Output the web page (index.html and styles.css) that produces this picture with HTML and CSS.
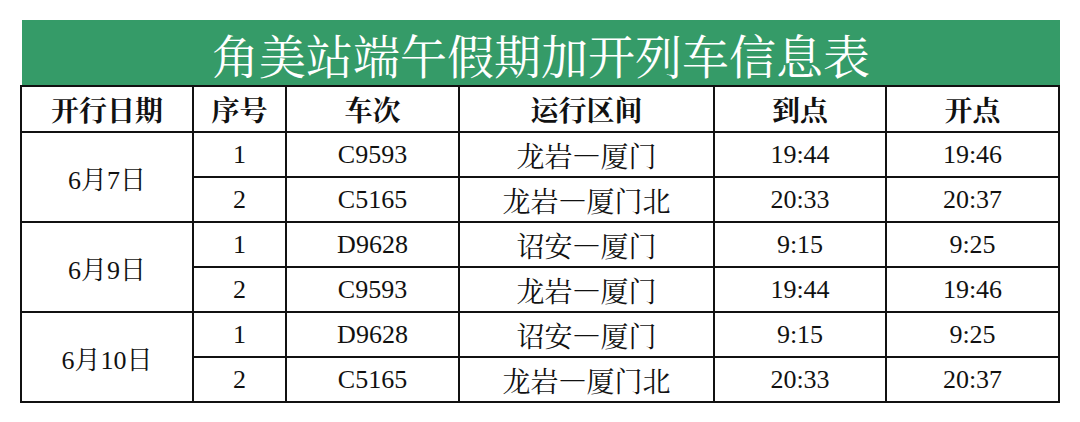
FILE: index.html
```html
<!DOCTYPE html>
<html lang="zh-CN">
<head>
<meta charset="utf-8">
<title>角美站端午假期加开列车信息表</title>
<link rel="stylesheet" href="styles.css">
</head>
<body>
<div class="sheet">
  <div class="title">角美站端午假期加开列车信息表</div>
  <table class="grid">
    <colgroup>
      <col class="c-date"><col class="c-no"><col class="c-train"><col class="c-route"><col class="c-arr"><col class="c-dep">
    </colgroup>
    <thead>
      <tr><th>开行日期</th><th>序号</th><th>车次</th><th>运行区间</th><th>到点</th><th>开点</th></tr>
    </thead>
    <tbody>
      <tr><td rowspan="2" class="date">6月7日</td><td>1</td><td>C9593</td><td class="cjk">龙岩—厦门</td><td>19:44</td><td>19:46</td></tr>
      <tr><td>2</td><td>C5165</td><td class="cjk">龙岩—厦门北</td><td>20:33</td><td>20:37</td></tr>
      <tr><td rowspan="2" class="date">6月9日</td><td>1</td><td>D9628</td><td class="cjk">诏安—厦门</td><td>9:15</td><td>9:25</td></tr>
      <tr><td>2</td><td>C9593</td><td class="cjk">龙岩—厦门</td><td>19:44</td><td>19:46</td></tr>
      <tr><td rowspan="2" class="date">6月10日</td><td>1</td><td>D9628</td><td class="cjk">诏安—厦门</td><td>9:15</td><td>9:25</td></tr>
      <tr><td>2</td><td>C5165</td><td class="cjk">龙岩—厦门北</td><td>20:33</td><td>20:37</td></tr>
    </tbody>
  </table>
</div>
</body>
</html>
```

FILE: styles.css
```css
html, body {
  margin: 0;
  padding: 0;
  background: #ffffff;
}

.sheet {
  padding: 20px 20px 0 20px;
  width: 1040px;
}

.title {
  margin-left: 2px;
  width: 1038px;
  height: 66px;
  background: #359b68;
  color: #ffffff;
  font-family: "Noto Serif CJK SC", "Noto Sans CJK SC", serif;
  font-size: 47px;
  line-height: 68px;
  text-align: center;
}

.grid {
  border-collapse: collapse;
  width: 1040px;
  table-layout: fixed;
  margin-top: -1px;
  font-family: "Liberation Serif", "Noto Serif CJK SC", "Noto Sans CJK SC", serif;
  color: #111111;
}

.c-date { width: 172px; }
.c-no { width: 93px; }
.c-train { width: 173px; }
.c-route { width: 255px; }
.c-arr { width: 172px; }
.c-dep { width: 173px; }

.grid th,
.grid td {
  border: 2px solid #111111;
  padding: 0;
  text-align: center;
  vertical-align: middle;
}

.grid th {
  height: 44px;
  font-family: "Noto Serif CJK SC", "Noto Sans CJK SC", sans-serif;
  font-weight: 700;
  font-size: 28px;
}

.grid td {
  height: 43px;
  font-size: 26px;
}

.grid td.cjk {
  font-size: 28px;
  font-family: "Noto Serif CJK SC", "Noto Sans CJK SC", serif;
  font-weight: 400;
}

.grid td.date {
  font-size: 26px;
}
```
